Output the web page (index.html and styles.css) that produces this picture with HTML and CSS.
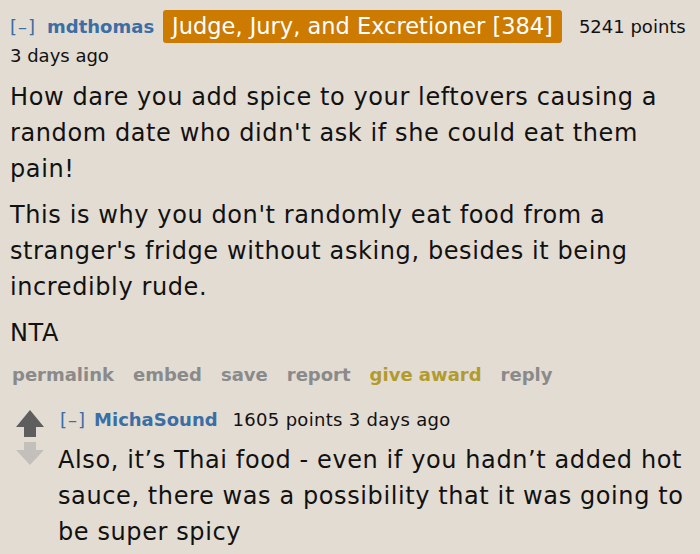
FILE: index.html
```html
<!DOCTYPE html>
<html>
<head>
<meta charset="utf-8">
<link rel="stylesheet" href="styles.css">
</head>
<body>
<div class="comment">
  <div class="tagline">
    <span class="toggle">[–]</span>
    <span class="author">mdthomas</span>
    <span class="flair">Judge, Jury, and Excretioner [384]</span>
    <span class="score">5241 points</span>
  </div>
  <div class="time">3 days ago</div>
  <div class="body main-body">
    <p>How dare you add spice to your leftovers causing a random date who didn't ask if she could eat them pain!</p>
    <p>This is why you don't randomly eat food from a stranger's fridge without asking, besides it being incredibly rude.</p>
    <p>NTA</p>
  </div>
  <ul class="actions">
    <li>permalink</li>
    <li>embed</li>
    <li>save</li>
    <li>report</li>
    <li class="award">give award</li>
    <li>reply</li>
  </ul>
  <div class="child">
    <div class="votes">
      <svg class="arrow up" width="28" height="27" viewBox="0 0 28 27"><path d="M14 0 L28 17 L20 17 L20 27 L8 27 L8 17 L0 17 Z"/></svg>
      <svg class="arrow down" width="28" height="23" viewBox="0 0 28 23"><path d="M8 0 L20 0 L20 8 L28 8 L14 23 L0 8 L8 8 Z"/></svg>
    </div>
    <div class="child-main">
      <div class="tagline small">
        <span class="toggle">[–]</span>
        <span class="author">MichaSound</span>
        <span class="score">1605 points 3 days ago</span>
      </div>
      <div class="body">
        <p>Also, it’s Thai food - even if you hadn’t added hot sauce, there was a possibility that it was going to be super spicy</p>
      </div>
    </div>
  </div>
</div>
</body>
</html>
```
FILE: styles.css
```css
html, body {
  margin: 0;
  padding: 0;
  background: #e3dcd3;
}
body {
  font-family: "DejaVu Sans", Verdana, sans-serif;
  color: #111;
  padding: 9px 0 0 10px;
}
.tagline {
  display: flex;
  align-items: center;
  height: 34px;
  font-size: 18px;
}
.toggle {
  color: #3a6ea5;
  margin-right: 11px;
  letter-spacing: 1px;
}
.author {
  color: #3a6ea5;
  font-weight: bold;
  margin-right: 9px;
}
.flair {
  background: #cc7a00;
  color: #fff;
  font-size: 22.5px;
  border-radius: 3px;
  padding: 2px 9px;
  margin-right: 17px;
  line-height: 29px;
}
.score {
  color: #111;
}
.time {
  font-size: 18px;
  line-height: 26px;
}
.body {
  font-size: 24px;
  letter-spacing: 0.6px;
  line-height: 36px;
  margin-top: 10px;
}
.main-body {
  max-width: 680px;
}
.body p {
  margin: 0 0 10px 0;
}
.actions {
  list-style: none;
  margin: 0;
  padding: 0 0 0 2px;
  display: flex;
  gap: 19px;
  font-size: 18px;
  font-weight: bold;
  color: #8a8a8a;
  line-height: 28px;
}
.actions .award {
  color: #b19b2d;
}
.child {
  display: flex;
  margin-top: 15px;
  margin-left: 6px;
}
.votes {
  display: flex;
  flex-direction: column;
  gap: 5px;
  width: 42px;
  flex-shrink: 0;
  padding-top: 6px;
  box-sizing: border-box;
}
.arrow.up { fill: #5e5e5e; }
.arrow.down { fill: #c3c0bb; }
.child-main {
  padding-left: 2px;
}
.tagline.small {
  height: 30px;
}
.tagline.small .toggle {
  margin-right: 8px;
}
.tagline.small .author {
  margin-right: 15px;
}
.tagline.small .score {
  letter-spacing: 0.3px;
}
.child .body {
  margin-top: 8px;
  margin-left: -2px;
}
```
